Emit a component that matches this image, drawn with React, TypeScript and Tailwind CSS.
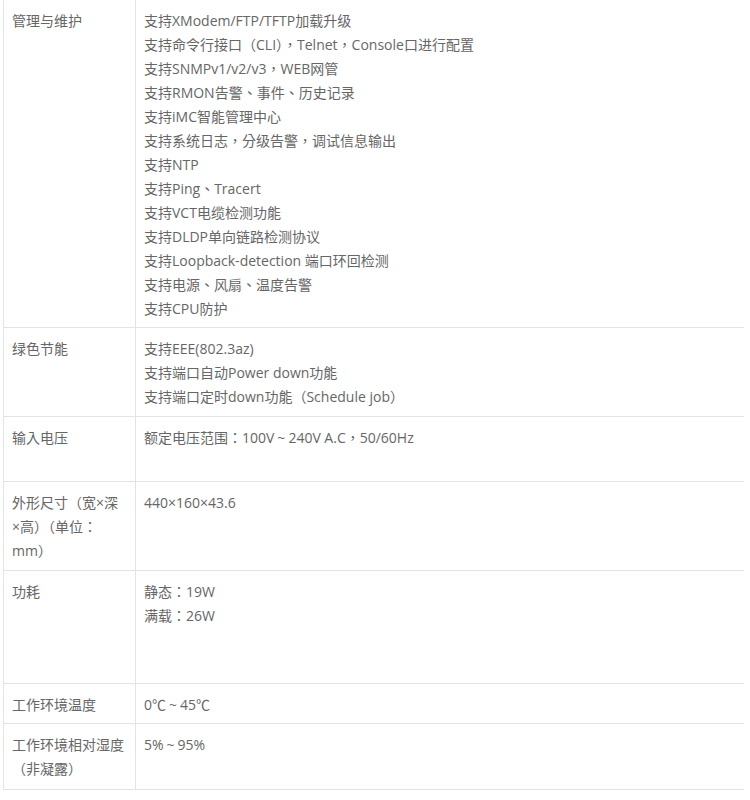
import React from "react";

type Row = { label: string[]; value: string[]; h: string };

const rows: Row[] = [
  {
    label: ["管理与维护"],
    value: [
      "支持XModem/FTP/TFTP加载升级",
      "支持命令行接口（CLI），Telnet，Console口进行配置",
      "支持SNMPv1/v2/v3，WEB网管",
      "支持RMON告警、事件、历史记录",
      "支持iMC智能管理中心",
      "支持系统日志，分级告警，调试信息输出",
      "支持NTP",
      "支持Ping、Tracert",
      "支持VCT电缆检测功能",
      "支持DLDP单向链路检测协议",
      "支持Loopback-detection 端口环回检测",
      "支持电源、风扇、温度告警",
      "支持CPU防护",
    ],
    h: "h-[328px]",
  },
  {
    label: ["绿色节能"],
    value: ["支持EEE(802.3az)", "支持端口自动Power down功能", "支持端口定时down功能（Schedule job）"],
    h: "h-[89px]",
  },
  { label: ["输入电压"], value: ["额定电压范围：100V~240V A.C，50/60Hz"], h: "h-[65px]" },
  {
    label: ["外形尺寸（宽×深", "×高）（单位：", "mm）"],
    value: ["440×160×43.6"],
    h: "h-[89px]",
  },
  { label: ["功耗"], value: ["静态：19W", "满载：26W"], h: "h-[113px]" },
  { label: ["工作环境温度"], value: ["0℃~45℃"], h: "h-[40px]" },
  { label: ["工作环境相对湿度", "（非凝露）"], value: ["5%~95%"], h: "h-[66px]" },
];

function Line({ t }: { t: string }) {
  const parts = t.split("~");
  return (
    <div className="whitespace-nowrap">
      {parts.map((p, k) => (
        <React.Fragment key={k}>
          {k > 0 && <span className="inline-block w-[14px] text-center">~</span>}
          {p}
        </React.Fragment>
      ))}
    </div>
  );
}

export default function App() {
  return (
    <div
      className="w-[750px] h-[800px] bg-white text-[#666666] text-[14px] leading-[24px]"
      style={{ fontFamily: '"Open Sans", "Noto Sans CJK TC", sans-serif' }}
    >
      <div className="ml-[3px] w-[741px] border-l border-[#e3e3e3]">
        {rows.map((r, i) => (
          <div key={i} className={`flex border-b border-[#e3e3e3] ${r.h}`}>
            <div className="w-[132px] shrink-0 border-r border-[#e3e3e3] pl-[8px] pt-[9px]">
              {r.label.map((t, j) => (
                <Line key={j} t={t} />
              ))}
            </div>
            <div className="flex-1 pl-[8px] pt-[9px]">
              {r.value.map((t, j) => (
                <Line key={j} t={t} />
              ))}
            </div>
          </div>
        ))}
      </div>
    </div>
  );
}
